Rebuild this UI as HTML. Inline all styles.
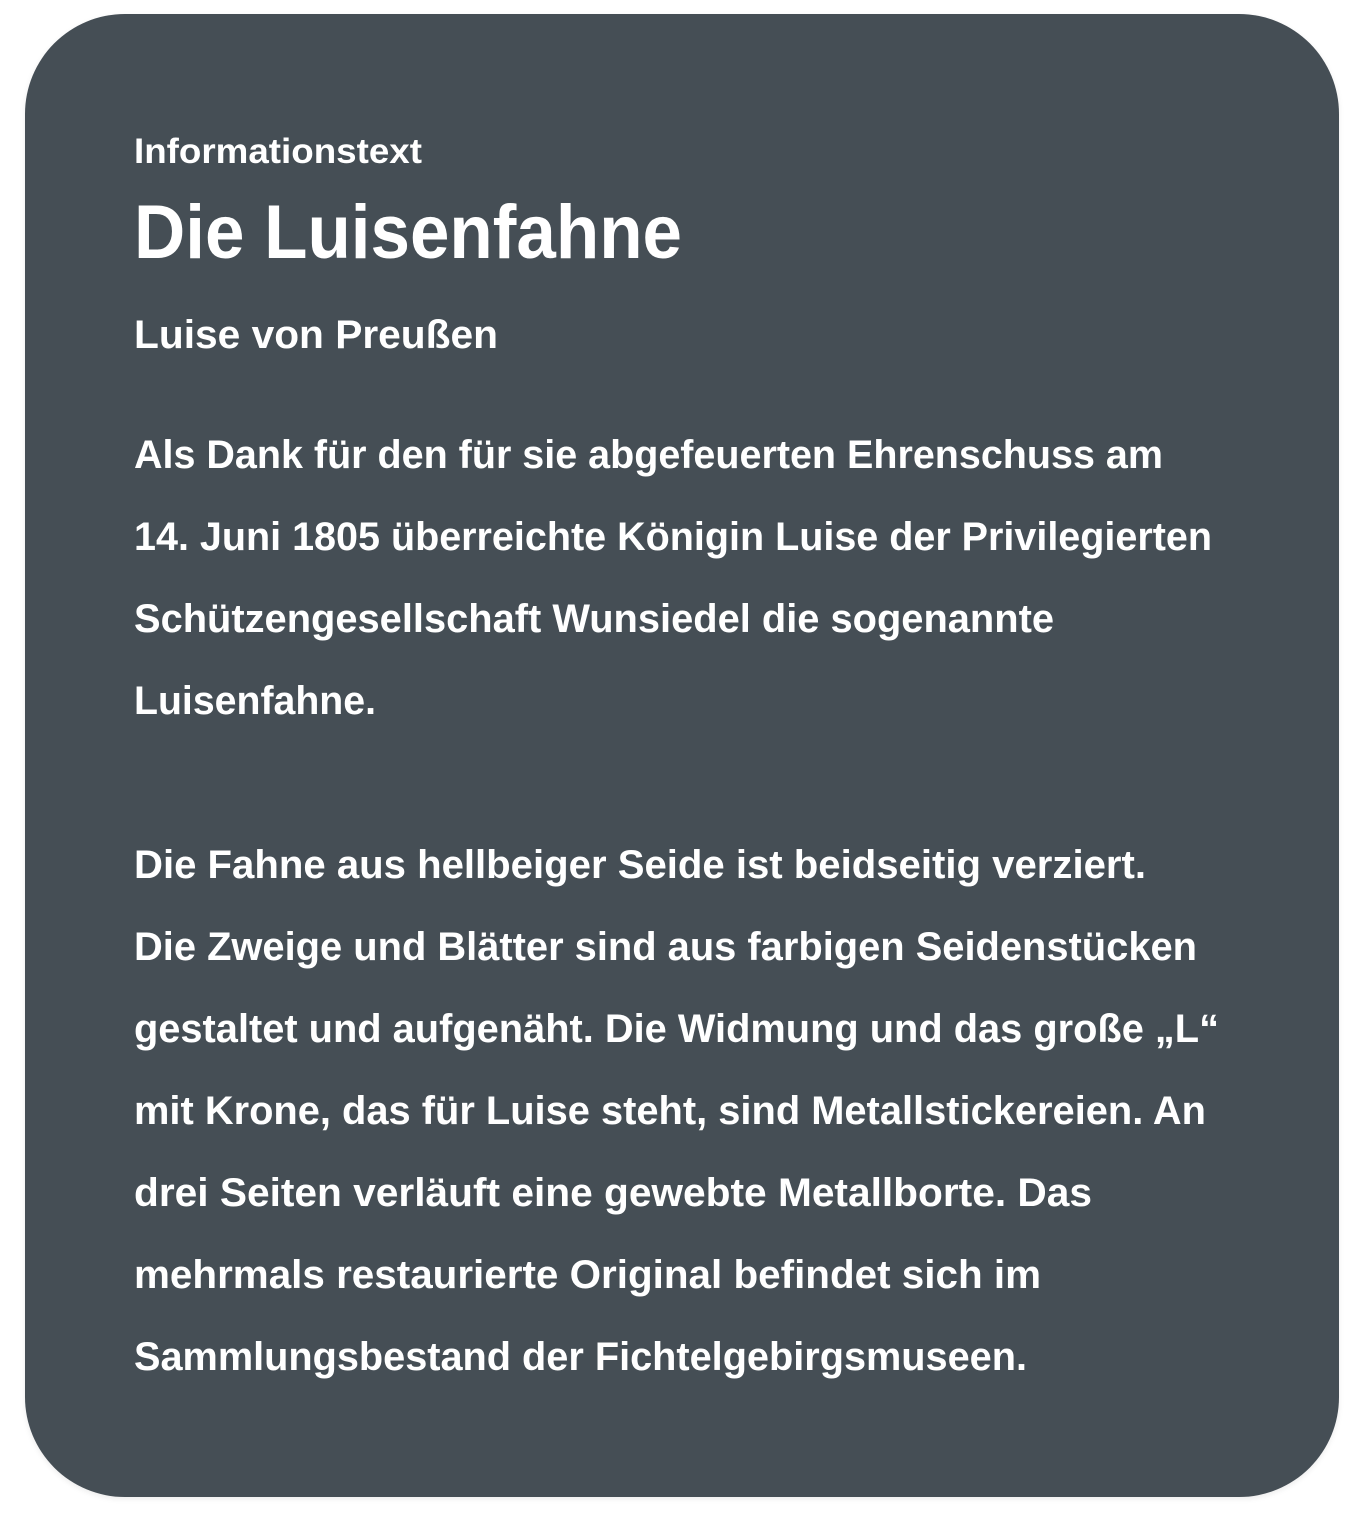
<!DOCTYPE html>
<html><head><meta charset="utf-8"><style>
html,body{margin:0;padding:0;background:#fff;width:1371px;height:1536px;overflow:hidden}
.card{position:absolute;left:25px;top:14px;width:1314px;height:1483px;background:#454e55;border-radius:100px;box-shadow:0 2px 6px rgba(0,0,0,.08)}
svg{position:absolute;left:0;top:0}
text{font-family:"Liberation Sans",sans-serif;fill:#fff;font-weight:bold}
</style></head><body>
<div class="card"></div>
<svg width="1371" height="1536">
<text x="134" y="163" font-size="35" textLength="288" lengthAdjust="spacingAndGlyphs">Informationstext</text>
<text x="134" y="258" font-size="76" textLength="548" lengthAdjust="spacingAndGlyphs">Die Luisenfahne</text>
<text x="134" y="348" font-size="40" textLength="364" lengthAdjust="spacingAndGlyphs">Luise von Preußen</text>
<g font-size="40">
<text x="134" y="468" textLength="1029" lengthAdjust="spacingAndGlyphs">Als Dank für den für sie abgefeuerten Ehrenschuss am</text>
<text x="134" y="550" textLength="1078" lengthAdjust="spacingAndGlyphs">14. Juni 1805 überreichte Königin Luise der Privilegierten</text>
<text x="134" y="632" textLength="920" lengthAdjust="spacingAndGlyphs">Schützengesellschaft Wunsiedel die sogenannte</text>
<text x="134" y="714" textLength="242" lengthAdjust="spacingAndGlyphs">Luisenfahne.</text>
<text x="134" y="878" textLength="1012" lengthAdjust="spacingAndGlyphs">Die Fahne aus hellbeiger Seide ist beidseitig verziert.</text>
<text x="134" y="960" textLength="1063" lengthAdjust="spacingAndGlyphs">Die Zweige und Blätter sind aus farbigen Seidenstücken</text>
<text x="134" y="1042" textLength="1085" lengthAdjust="spacingAndGlyphs">gestaltet und aufgenäht. Die Widmung und das große „L“</text>
<text x="134" y="1124" textLength="1072" lengthAdjust="spacingAndGlyphs">mit Krone, das für Luise steht, sind Metallstickereien. An</text>
<text x="134" y="1206" textLength="958" lengthAdjust="spacingAndGlyphs">drei Seiten verläuft eine gewebte Metallborte. Das</text>
<text x="134" y="1288" textLength="907" lengthAdjust="spacingAndGlyphs">mehrmals restaurierte Original befindet sich im</text>
<text x="134" y="1370" textLength="893" lengthAdjust="spacingAndGlyphs">Sammlungsbestand der Fichtelgebirgsmuseen.</text>
</g>
</svg>
</body></html>
